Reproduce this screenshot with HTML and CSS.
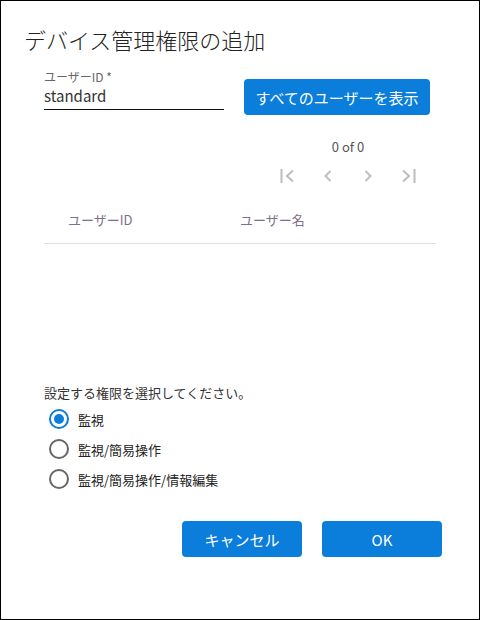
FILE: index.html
```html
<!DOCTYPE html>
<html lang="ja">
<head>
<meta charset="utf-8">
<title>デバイス管理権限の追加</title>
<link rel="stylesheet" href="styles.css">
</head>
<body>
<div class="dialog">
  <h1 class="title">デバイス管理権限の追加</h1>
  <div class="content">
    <div class="search-row">
      <div class="field">
        <div class="field-label">ユーザーID *</div>
        <div class="field-input">standard</div>
      </div>
      <button class="btn btn-show">すべてのユーザーを表示</button>
    </div>
    <div class="pager">
      <div class="pager-count">0 of 0</div>
      <div class="pager-nav">
        <span class="pager-btn"><svg width="18" height="18" viewBox="0 0 18 18"><path d="M2.5 2v14" stroke="#bdbdbd" stroke-width="2" fill="none"/><path d="M14 3.5 8 9l6 5.5" stroke="#bdbdbd" stroke-width="2" fill="none"/></svg></span>
        <span class="pager-btn"><svg width="18" height="18" viewBox="0 0 18 18"><path d="M11.5 4 6.5 9l5 5" stroke="#bdbdbd" stroke-width="2" fill="none"/></svg></span>
        <span class="pager-btn"><svg width="18" height="18" viewBox="0 0 18 18"><path d="M6.5 4l5 5-5 5" stroke="#bdbdbd" stroke-width="2" fill="none"/></svg></span>
        <span class="pager-btn"><svg width="18" height="18" viewBox="0 0 18 18"><path d="M4 3.5 10 9l-6 5.5" stroke="#bdbdbd" stroke-width="2" fill="none"/><path d="M15.5 2v14" stroke="#bdbdbd" stroke-width="2" fill="none"/></svg></span>
      </div>
    </div>
    <div class="table">
      <div class="table-head">
        <div class="th th-id">ユーザーID</div>
        <div class="th th-name">ユーザー名</div>
      </div>
      <div class="table-body"></div>
    </div>
    <div class="perm-label">設定する権限を選択してください。</div>
    <div class="radios">
      <div class="radio-row"><span class="radio radio-on"></span><span class="radio-text">監視</span></div>
      <div class="radio-row"><span class="radio"></span><span class="radio-text">監視/簡易操作</span></div>
      <div class="radio-row"><span class="radio"></span><span class="radio-text">監視/簡易操作/情報編集</span></div>
    </div>
    <div class="actions">
      <button class="btn btn-action">キャンセル</button>
      <button class="btn btn-action">OK</button>
    </div>
  </div>
</div>
</body>
</html>
```

FILE: styles.css
```css
* { box-sizing: border-box; }
html, body { margin: 0; padding: 0; background: #fff; }
body {
  font-family: "Noto Sans CJK JP", "Noto Sans", "Liberation Sans", sans-serif;
  color: #333;
}
.dialog {
  width: 480px;
  height: 620px;
  border: 1px solid #000;
  padding-top: 23px;
}
.title {
  margin: 0 0 0 23px;
  font-size: 22px;
  line-height: 30px;
  font-weight: 300;
  color: #222;
}
.content {
  margin: 0 43px;
  width: 392px;
}
.search-row {
  display: flex;
  align-items: flex-start;
  margin-top: 15px;
}
.field { width: 180px; }
.field-label {
  font-size: 12px;
  line-height: 16px;
  color: #666;
}
.field-input {
  font-size: 15px;
  line-height: 22px;
  height: 25px;
  color: #333;
  border-bottom: 1px solid #111;
}
.btn {
  font-family: inherit;
  border: none;
  border-radius: 4px;
  background: #0b7dda;
  color: #fff;
  padding: 0;
  cursor: pointer;
}
.btn-show {
  margin: 10px 0 0 20px;
  width: 186px;
  height: 36px;
  font-size: 15px;
}
.pager {
  margin: 23px 0 0 auto;
  width: 176px;
  display: flex;
  flex-direction: column;
  align-items: center;
}
.pager-count {
  font-size: 13px;
  line-height: 17px;
  color: #555;
}
.pager-nav {
  display: flex;
  margin-top: 9px;
}
.pager-btn {
  width: 40px;
  height: 24px;
  display: flex;
  align-items: center;
  justify-content: center;
}
.table-head {
  margin-top: 8px;
  display: flex;
  height: 48px;
  align-items: center;
  border-bottom: 1px solid #e0e0e0;
}
.th {
  font-size: 13px;
  color: #7e6f8e;
}
.th-id { width: 196px; padding-left: 24px; }
.table-body { height: 140px; }
.perm-label {
  font-size: 13px;
  line-height: 18px;
  color: #333;
}
.radios { margin-top: 2px; }
.radio-row {
  display: flex;
  align-items: center;
  height: 30px;
  padding-left: 5px;
}
.radio {
  width: 20px;
  height: 20px;
  border: 2px solid #666;
  border-radius: 50%;
  display: flex;
  align-items: center;
  justify-content: center;
  flex: none;
}
.radio-on { border-color: #0b7dda; }
.radio-on::after {
  content: "";
  width: 10px;
  height: 10px;
  border-radius: 50%;
  background: #0b7dda;
}
.radio-text {
  margin-left: 9px;
  font-size: 13px;
  color: #222;
}
.actions {
  display: flex;
  justify-content: flex-end;
  gap: 20px;
  margin-top: 27px;
  margin-right: -6px;
}
.btn-action {
  width: 120px;
  height: 36px;
  font-size: 15px;
}
```
